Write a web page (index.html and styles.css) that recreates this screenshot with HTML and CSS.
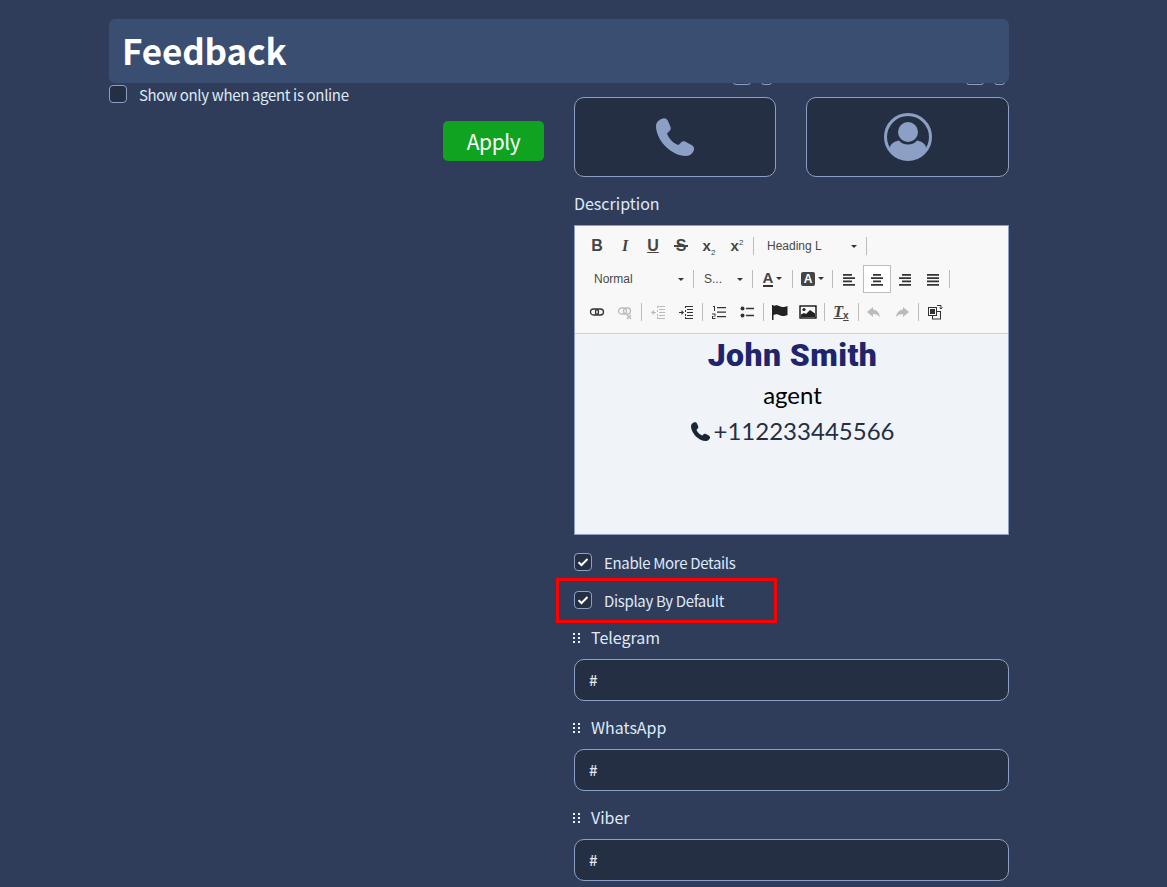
FILE: index.html
```html
<!DOCTYPE html>
<html lang="en">
<head>
    <meta charset="UTF-8">
    <title>Feedback</title>
    <link rel="stylesheet" href="styles.css">
</head>
<body>
    <svg class="defs" width="0" height="0">
        <symbol id="phone" viewBox="0 0 38 38">
            <path d="M7 .5C9 0 11 1 12 3l2.500 6c.5 2 0 3-1 4L11 15.500c2 5.500 6 9.500 11.500 11.500L25 24.500c1-1 2.500-1.500 4-1l6.500 3.500c2 1 3 3 2.500 5-1 3-4 6-8 6C15 38 0 22 0 8 0 4.500 3 1.500 7 .5z"/>
        </symbol>
        <symbol id="grip" viewBox="0 0 7 10">
            <path d="M0 0h2v2H0zM5 0h2v2H5zM0 4h2v2H0zM5 4h2v2H5zM0 8h2v2H0zM5 8h2v2H5z"/>
        </symbol>
    </svg>

    <div class="page">
        <h1 class="title">Feedback</h1>

        <!-- Left column -->
        <div class="col-left">
            <label class="check">
                <span class="box"></span>
                Show only when agent is online
            </label>
            <div class="apply-row">
                <button class="apply">Apply</button>
            </div>
        </div>

        <!-- Right column -->
        <div class="col-right">
            <div class="thumbs">
                <div class="thumb-col">
                    <div class="thumb-tools"><span class="tool-a"></span><span class="tool-b"></span></div>
                    <div class="thumb">
                        <svg class="thumb-phone"><use href="#phone"/></svg>
                    </div>
                </div>
                <div class="thumb-col">
                    <div class="thumb-tools"><span class="tool-a"></span><span class="tool-b"></span></div>
                    <div class="thumb">
                        <svg class="thumb-user" viewBox="0 0 48 48">
                            <defs><clipPath id="inner"><circle cx="24" cy="24" r="23"/></clipPath></defs>
                            <circle cx="24" cy="24" r="22.500" fill="none" stroke="#8ba0c4" stroke-width="3"/>
                            <circle cx="24" cy="19" r="10" fill="#8ba0c4"/>
                            <path clip-path="url(#inner)" d="M6 48V35c0-4 4-6.500 9-7.500 2 2.500 5 4 9 4s7-1.500 9-4c5 1 9 3.500 9 7.500v13z" fill="#8ba0c4"/>
                        </svg>
                    </div>
                </div>
            </div>

            <div class="field-label description">Description</div>

            <div class="editor">
                <div class="toolbar">
                    <div class="tb-row">
                        <span class="tb-btn txt">B</span>
                        <span class="tb-btn txt ital">I</span>
                        <span class="tb-btn txt under">U</span>
                        <span class="tb-btn txt strike">S</span>
                        <span class="tb-btn txt script">x<sub>2</sub></span>
                        <span class="tb-btn txt script">x<sup>2</sup></span>
                        <span class="sep"></span>
                        <span class="combo">Heading L<i class="arrow"></i></span>
                        <span class="sep"></span>
                    </div>
                    <div class="tb-row">
                        <span class="combo">Normal<i class="arrow"></i></span>
                        <span class="sep"></span>
                        <span class="combo combo-small">S...<i class="arrow"></i></span>
                        <span class="sep"></span>
                        <span class="tb-btn wide"><span class="color-a">A</span><i class="arrow"></i></span>
                        <span class="sep"></span>
                        <span class="tb-btn wide"><span class="bg-a">A</span><i class="arrow"></i></span>
                        <span class="sep"></span>
                        <span class="tb-btn"><svg class="ic" viewBox="0 0 16 16"><path d="M2 3h9v1.700H2zM2 6.300h12V8H2zM2 9.600h9v1.700H2zM2 13h12v1.700H2z"/></svg></span>
                        <span class="tb-btn active"><svg class="ic" viewBox="0 0 16 16"><path d="M4 3h8v1.700H4zM2 6.300h12V8H2zM4 9.600h8v1.700H4zM2 13h12v1.700H2z"/></svg></span>
                        <span class="tb-btn"><svg class="ic" viewBox="0 0 16 16"><path d="M5 3h9v1.700H5zM2 6.300h12V8H2zM5 9.600h9v1.700H5zM2 13h12v1.700H2z"/></svg></span>
                        <span class="tb-btn"><svg class="ic" viewBox="0 0 16 16"><path d="M2 3h12v1.700H2zM2 6.300h12V8H2zM2 9.600h12v1.700H2zM2 13h12v1.700H2z"/></svg></span>
                        <span class="sep"></span>
                    </div>
                    <div class="tb-row">
                        <span class="tb-btn"><svg class="ic" viewBox="0 0 16 16"><rect x="1.500" y="5" width="8" height="6" rx="3" fill="none" stroke="#333" stroke-width="1.300"/><rect x="6.500" y="5" width="8" height="6" rx="3" fill="none" stroke="#333" stroke-width="1.300"/></svg></span>
                        <span class="tb-btn off"><svg class="ic" viewBox="0 0 16 16"><rect x="1.500" y="4" width="8" height="6" rx="3" fill="none" stroke="#333" stroke-width="1.300"/><rect x="6.500" y="4" width="7" height="6" rx="3" fill="none" stroke="#333" stroke-width="1.300"/><path d="M10 11l4 4m0-4l-4 4" stroke="#333" stroke-width="1.500"/></svg></span>
                        <span class="sep"></span>
                        <span class="tb-btn off"><svg class="ic" viewBox="0 0 16 16"><path d="M8 2h7v1H8zM9 5h6v1H9zM9 8h6v1H9zM9 11h6v1H9zM8 14h7v1H8zM2 8h4v1H2zM4 6v5L1 8.500zM7 2h1v2H7zM7 6h1v2H7zM7 10h1v2H7zM7 13h1v2H7z"/></svg></span>
                        <span class="tb-btn"><svg class="ic" viewBox="0 0 16 16"><path d="M8 2h7v1H8zM9 5h6v1H9zM9 8h6v1H9zM9 11h6v1H9zM8 14h7v1H8zM1 8h3v1H1zM3.500 6L6 8.500 3.500 11zM7 2h1v2H7zM7 6h1v2H7zM7 10h1v2H7zM7 13h1v2H7z"/></svg></span>
                        <span class="sep"></span>
                        <span class="tb-btn"><svg class="ic" viewBox="0 0 16 16"><path d="M6 3h9v1.300H6zM6 7.500h9v1.300H6zM6 12h9v1.300H6zM2 2h2v5H3V3H2zM1 9.500h3.500v3H2V14h2.500v1H1v-3h2.500v-1.500H1z"/></svg></span>
                        <span class="tb-btn"><svg class="ic" viewBox="0 0 16 16"><circle cx="3.500" cy="4.500" r="2"/><circle cx="3.500" cy="11.500" r="2"/><path d="M7 3.700h8v1.500H7zM7 10.700h8v1.500H7z"/></svg></span>
                        <span class="sep"></span>
                        <span class="tb-btn"><svg class="ic ic-big" viewBox="0 0 18 18"><path d="M1 2h1.500v15H1zM2.500 3c3-1.500 4.500-.5 7 .5s4 .5 7-.5v9c-3 1-4.500 1.500-7 .5s-4-2-7-.5z"/></svg></span>
                        <span class="tb-btn"><svg class="ic ic-big" viewBox="0 0 18 18"><rect x="1" y="3" width="16" height="12" fill="none" stroke="#000" stroke-width="1.300"/><circle cx="5" cy="6.500" r="1.600"/><path d="M2 14v-2.500l3-1.500 2 1 4-4 5 3.500V14z"/></svg></span>
                        <span class="sep"></span>
                        <span class="tb-btn txt clear">T<i class="clear-x">x</i></span>
                        <span class="sep sep-clear"></span>
                        <span class="tb-btn off"><svg class="ic" viewBox="0 0 16 16"><path d="M7 3L1 8l6 5v-3c3 0 5 1 7 3-.5-4-3-7-7-7.500z"/></svg></span>
                        <span class="tb-btn off"><svg class="ic" viewBox="0 0 16 16"><path d="M9 3l6 5-6 5v-3c-3 0-5 1-7 3 .5-4 3-7 7-7.500z"/></svg></span>
                        <span class="sep"></span>
                        <span class="tb-btn"><svg class="ic" viewBox="0 0 16 16"><rect x="5.500" y="7.500" width="8" height="7.500" fill="none" stroke="#333"/><rect x="1.500" y="3.500" width="8" height="8" fill="#f8f8f8" stroke="#333"/><rect x="3" y="5" width="5" height="5" fill="#333"/><path d="M10 1.500h4V5M12.500 3.500L14 5l1.500-1.500" fill="none" stroke="#333"/></svg></span>
                    </div>
                </div>
                <div class="editor-body">
                    <div class="ed-name">John Smith</div>
                    <div class="ed-role">agent</div>
                    <div class="ed-phone"><svg class="ed-phone-icon"><use href="#phone"/></svg>+112233445566</div>
                </div>
            </div>

            <label class="check check-first">
                <span class="box"><svg viewBox="0 0 12 10"><path d="M1.500 5.200l3 2.800 6-6" fill="none" stroke="#fff" stroke-width="2"/></svg></span>
                Enable More Details
            </label>
            <label class="check check-next">
                <span class="box"><svg viewBox="0 0 12 10"><path d="M1.500 5.200l3 2.800 6-6" fill="none" stroke="#fff" stroke-width="2"/></svg></span>
                Display By Default
                <span class="highlight"></span>
            </label>

            <div class="social first">
                <div class="field-label"><svg class="grip"><use href="#grip"/></svg>Telegram</div>
                <div class="input">#</div>
            </div>
            <div class="social">
                <div class="field-label"><svg class="grip"><use href="#grip"/></svg>WhatsApp</div>
                <div class="input">#</div>
            </div>
            <div class="social">
                <div class="field-label"><svg class="grip"><use href="#grip"/></svg>Viber</div>
                <div class="input">#</div>
            </div>
        </div>
    </div>
</body>
</html>
```

FILE: styles.css
```css
/* General */
html, body {
    margin: 0;
    padding: 0;
    height: 100%;
    overflow: hidden;
}

body {
    background-color: #2f3d5b;
    color: #dfe9f8;
    font-family: "Noto Sans CJK SC", "Noto Sans", sans-serif;
    font-size: 15px;
}

.defs {
    position: absolute;
}

.page {
    position: relative;
    display: grid;
    grid-template-columns: 435px 435px;
    column-gap: 30px;
    padding-left: 109px;
}

/* Title bar sits over the top of the columns */
.title {
    position: absolute;
    top: 19px;
    left: 109px;
    z-index: 2;
    box-sizing: border-box;
    width: 900px;
    height: 64px;
    margin: 0;
    padding-left: 13px;
    background-color: #3a4e72;
    border-radius: 6px;
    color: #fff;
    font-size: 35px;
    font-weight: 700;
    letter-spacing: -0.1px;
    line-height: 62px;
}

/* Checkbox rows */
.check {
    position: relative;
    display: flex;
    align-items: flex-start;
    gap: 12px;
    height: 18px;
    letter-spacing: -0.34px;
    line-height: 20px;
}

.box {
    box-sizing: border-box;
    display: flex;
    align-items: center;
    justify-content: center;
    width: 18px;
    height: 18px;
    background-color: #252f43;
    border: 1px solid #8ba0c4;
    border-radius: 4px;
}

.box svg {
    width: 12px;
    height: 10px;
}

.col-left {
    padding-top: 85px;
}

.apply-row {
    display: flex;
    justify-content: flex-end;
    margin-top: 18px;
}

.apply {
    width: 101px;
    height: 40px;
    padding: 0;
    background-color: #0fa31f;
    border: none;
    border-radius: 5px;
    color: #fff;
    font-family: inherit;
    font-size: 21px;
    letter-spacing: -0.4px;
}

/* Thumbnails */
.col-right {
    padding-top: 60px;
}

.thumbs {
    display: grid;
    grid-template-columns: 202px 203px;
    column-gap: 30px;
}

.thumb-tools {
    display: flex;
    justify-content: flex-end;
    align-items: flex-end;
    gap: 10px;
    height: 25px;
    margin-bottom: 12px;
    padding-right: 4px;
}

.tool-a, .tool-b {
    box-sizing: border-box;
    height: 14px;
    border: 1px solid #8ba0c4;
    border-radius: 3px;
}

.tool-a {
    width: 18px;
}

.tool-b {
    width: 11px;
}

.thumb {
    box-sizing: border-box;
    display: flex;
    align-items: center;
    justify-content: center;
    height: 80px;
    background-color: #252f43;
    border: 1px solid #8ba0c4;
    border-radius: 10px;
}

.thumb-phone {
    width: 38px;
    height: 38px;
    fill: #8ba0c4;
}

.thumb-user {
    width: 48px;
    height: 48px;
}

/* Labels */
.field-label {
    display: flex;
    align-items: flex-start;
    height: 24px;
    margin-bottom: 9px;
    font-size: 16px;
    line-height: 23px;
}

.description {
    margin-top: 15px;
}

/* Rich text editor */
.editor {
    box-sizing: border-box;
    height: 310px;
    background-color: #f0f4f9;
    border: 1px solid #8ba0c4;
}

.toolbar {
    box-sizing: border-box;
    height: 108px;
    padding: 3px 0 0 8px;
    background-color: #f8f8f8;
    border-bottom: 1px solid #d1d1d1;
}

.tb-row {
    display: flex;
    align-items: center;
    height: 33px;
}

.tb-btn {
    box-sizing: border-box;
    flex: none;
    display: flex;
    align-items: center;
    justify-content: center;
    width: 28px;
    height: 28px;
    color: #444;
    font-family: "Liberation Sans", sans-serif;
}

.tb-btn.wide {
    width: 35px;
    gap: 3px;
}

.tb-btn.active {
    background-color: #fff;
    border: 1px solid #bcbcbc;
}

.tb-btn.off {
    opacity: 0.3;
}

.txt {
    font-size: 16px;
    font-weight: 700;
}

.ital {
    font-family: "Liberation Serif", serif;
    font-style: italic;
}

.under {
    text-decoration: underline;
}

.strike {
    position: relative;
}

.strike::after {
    content: "";
    position: absolute;
    top: 13px;
    left: 7px;
    right: 7px;
    height: 2px;
    background-color: #444;
}

.tb-btn.script {
    display: block;
    font-size: 15px;
    line-height: 28px;
    text-align: center;
}

.script sub, .script sup {
    font-size: 8px;
    font-weight: 400;
    line-height: 0;
}

.clear {
    font-family: "Liberation Serif", serif;
    font-style: italic;
    text-decoration: underline;
}

.clear-x {
    font-family: "Liberation Sans", sans-serif;
    font-size: 10px;
    font-style: normal;
    margin-top: 8px;
}

.sep {
    flex: none;
    width: 1px;
    height: 18px;
    margin: 0 2px;
    background-color: #bcbcbc;
}

.sep-clear {
    margin-left: 3px;
    margin-right: 1px;
}

.combo {
    box-sizing: border-box;
    flex: none;
    position: relative;
    width: 108px;
    padding-left: 11px;
    color: #484848;
    font-family: "Liberation Sans", sans-serif;
    font-size: 12px;
}

.combo-small {
    width: 54px;
    padding-left: 8px;
}

.arrow {
    display: block;
    width: 0;
    height: 0;
    border-top: 3px solid #333;
    border-left: 3px solid transparent;
    border-right: 3px solid transparent;
}

.combo .arrow {
    position: absolute;
    top: 6px;
    right: 7px;
}

.color-a {
    border-bottom: 2px solid #333;
    font-size: 15px;
    font-weight: 700;
    line-height: 15px;
}

.bg-a {
    width: 14px;
    height: 14px;
    background-color: #444;
    border-radius: 2px;
    color: #fff;
    font-size: 12px;
    font-weight: 700;
    line-height: 14px;
    text-align: center;
}

.ic {
    width: 16px;
    height: 16px;
    fill: #333;
}

.ic-big {
    width: 18px;
    height: 18px;
    fill: #222;
}

.editor-body {
    padding-left: 2px;
    text-align: center;
}

.ed-name {
    height: 42px;
    color: #20246b;
    font-family: Roboto, sans-serif;
    font-size: 32px;
    font-weight: 900;
    letter-spacing: 0.4px;
    line-height: 42px;
}

.ed-role {
    height: 38px;
    color: #000;
    font-family: Lato, sans-serif;
    font-size: 24px;
    line-height: 38px;
}

.ed-phone {
    display: flex;
    align-items: center;
    justify-content: center;
    gap: 4px;
    height: 34px;
    color: #252f43;
    font-family: Lato, sans-serif;
    font-size: 24px;
    line-height: 34px;
}

.ed-phone-icon {
    width: 19px;
    height: 19px;
    fill: #1c2536;
}

/* Checks below the editor */
.check-first {
    margin-top: 18px;
}

.check-next {
    margin-top: 20px;
}

.highlight {
    position: absolute;
    top: -13px;
    left: -18px;
    width: 221px;
    height: 45px;
    box-sizing: border-box;
    border: 3px solid #f00;
}

/* Social link fields */
.social {
    margin-top: 15px;
}

.social.first {
    margin-top: 17px;
}

.grip {
    flex: none;
    align-self: center;
    width: 7px;
    height: 10px;
    margin: 0 11px 0 -1px;
    fill: #eef3fb;
}

.input {
    box-sizing: border-box;
    height: 42px;
    padding-left: 14px;
    background-color: #252f43;
    border: 1px solid #8ba0c4;
    border-radius: 10px;
    font-size: 15px;
    font-weight: 500;
    line-height: 40px;
}
```
